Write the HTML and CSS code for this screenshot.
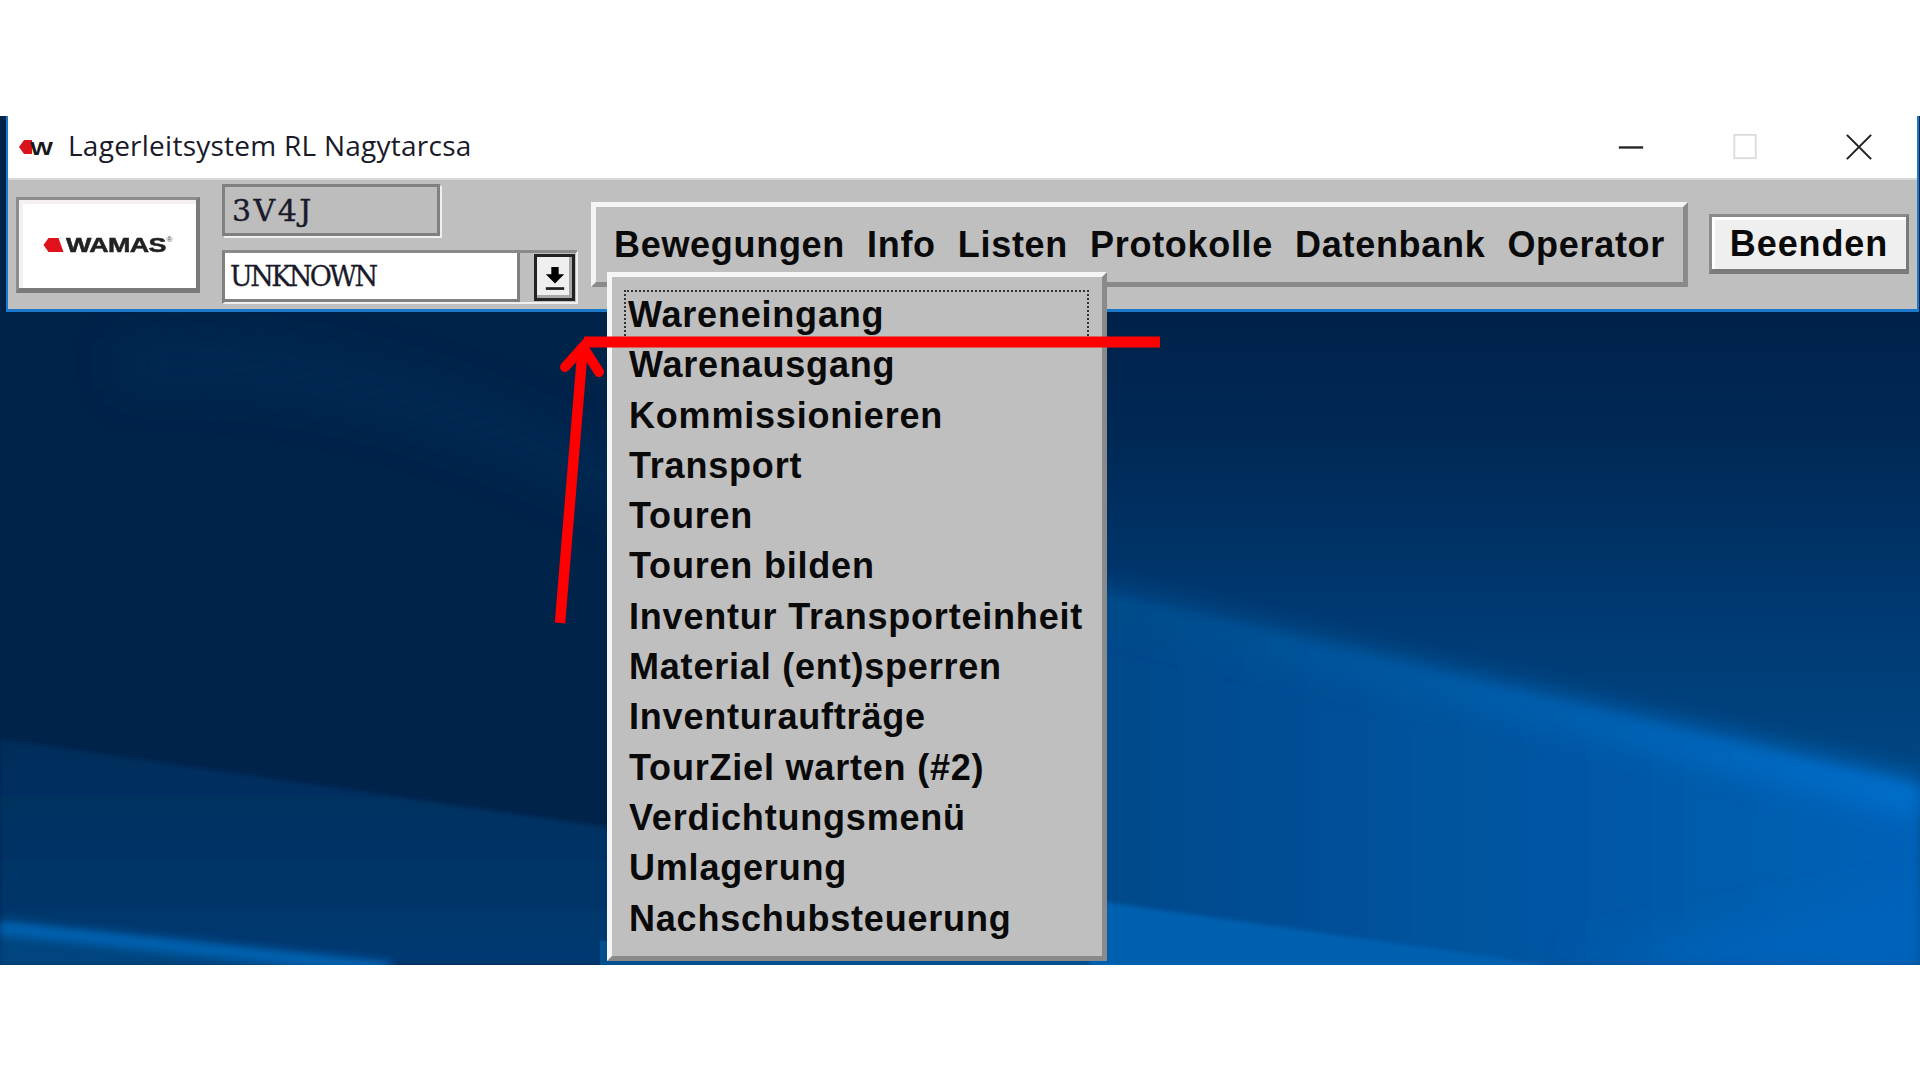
FILE: index.html
```html
<!DOCTYPE html>
<html lang="en">
<head>
    <meta charset="UTF-8">
    <title>Lagerleitsystem RL Nagytarcsa</title>
    <link rel="stylesheet" href="styles.css">
</head>
<body>

<div class="desktop">

    <svg class="wallpaper" viewBox="0 0 1920 849" preserveAspectRatio="none">
        <defs>
            <linearGradient id="rightSky" x1="0" y1="0" x2="0" y2="700" gradientUnits="userSpaceOnUse">
                <stop offset="0.290" stop-color="#00224a"/>
                <stop offset="0.490" stop-color="#002a58"/>
                <stop offset="0.690" stop-color="#003870"/>
                <stop offset="1" stop-color="#004a88"/>
            </linearGradient>
            <linearGradient id="rightLow" x1="1100" y1="0" x2="1920" y2="0" gradientUnits="userSpaceOnUse">
                <stop offset="0" stop-color="#00488a"/>
                <stop offset="1" stop-color="#0062b8"/>
            </linearGradient>
            <linearGradient id="ridge" x1="1100" y1="0" x2="1920" y2="0" gradientUnits="userSpaceOnUse">
                <stop offset="0" stop-color="#004a88"/>
                <stop offset="1" stop-color="#006fcc"/>
            </linearGradient>
            <linearGradient id="leftBand" x1="0" y1="620" x2="0" y2="849" gradientUnits="userSpaceOnUse">
                <stop offset="0" stop-color="#002c5a"/>
                <stop offset="1" stop-color="#003a72"/>
            </linearGradient>
            <filter id="blur2" filterUnits="userSpaceOnUse" x="0" y="0" width="1920" height="849"><feGaussianBlur stdDeviation="2"/></filter>
            <filter id="blur5" filterUnits="userSpaceOnUse" x="0" y="0" width="1920" height="849"><feGaussianBlur stdDeviation="5"/></filter>
            <filter id="blur12" filterUnits="userSpaceOnUse" x="0" y="0" width="1920" height="849"><feGaussianBlur stdDeviation="12"/></filter>
            <filter id="blur20" filterUnits="userSpaceOnUse" x="0" y="0" width="1920" height="849"><feGaussianBlur stdDeviation="20"/></filter>
        </defs>
        <rect width="1920" height="849" fill="#00234a"/>

        <!-- left of the menu -->
        <path d="M120 250 Q350 230 640 380" fill="none" stroke="#002d58" stroke-width="50" opacity="0.5" filter="url(#blur20)"/>
        <path d="M0 623 L640 716 V849 H0 Z" fill="url(#leftBand)" filter="url(#blur2)"/>
        <path d="M0 806 L400 849 H0 Z" fill="#00457f" filter="url(#blur2)"/>
        <path d="M0 812 L390 853" fill="none" stroke="#0062b0" stroke-width="14" filter="url(#blur5)"/>
        <rect x="600" y="825" width="500" height="24" fill="#00508f"/>

        <!-- right of the menu -->
        <rect x="1090" width="830" height="849" fill="url(#rightSky)"/>
        <path d="M1090 476 L1920 672 V849 H1090 Z" fill="url(#rightLow)" filter="url(#blur5)"/>
        <path d="M1090 486 L1920 684" fill="none" stroke="url(#ridge)" stroke-width="36" filter="url(#blur12)"/>
        <path d="M1090 784 L1570 852 H1090 Z" fill="#0060b0" filter="url(#blur2)"/>
        <path d="M1560 849 L1920 780 V849 Z" fill="#0064bc" filter="url(#blur20)"/>
    </svg>

    <div class="window">
        <div class="titlebar">
            <svg class="app-icon" viewBox="0 0 34 20">
                <path d="M0 10 L5 3 H13 V17 H5 Z" fill="#d8141c"/>
                <text class="app-icon-w" x="11" y="17.500" textLength="23" lengthAdjust="spacingAndGlyphs">W</text>
            </svg>
            <span class="title">Lagerleitsystem RL Nagytarcsa</span>
            <div class="win-buttons">
                <div class="win-btn"><svg viewBox="0 0 30 30"><path d="M2 15.500 H28" stroke="#222" stroke-width="2.500"/></svg></div>
                <div class="win-btn"><svg viewBox="0 0 30 30"><rect x="3.500" y="2" width="23" height="25" fill="none" stroke="#dcdcdc" stroke-width="2"/></svg></div>
                <div class="win-btn"><svg viewBox="0 0 30 30"><path d="M2 2 L28 28 M28 2 L2 28" stroke="#222" stroke-width="2.200"/></svg></div>
            </div>
        </div>

        <div class="toolbar">
            <div class="logo-btn">
                <svg class="logo-mark" viewBox="0 0 20 16">
                    <path d="M0 8 L5 1 H15 L20 15 H5 Z" fill="#e0101c"/>
                </svg>
                <span class="logo-text">WAMAS</span><span class="logo-reg">®</span>
            </div>

            <div class="fields">
                <div class="field field-ro">3V4J</div>
                <div class="combo">
                    <div class="field field-edit">UNKNOWN</div>
                    <div class="combo-btn">
                        <svg viewBox="0 0 24 28">
                            <path d="M8 2 H16 V10 H22 L12 20 L2 10 H8 Z" fill="#000"/>
                            <rect x="2" y="24" width="20" height="3" fill="#222"/>
                        </svg>
                    </div>
                </div>
            </div>

            <ul class="menubar">
                <li>Bewegungen</li>
                <li>Info</li>
                <li>Listen</li>
                <li>Protokolle</li>
                <li>Datenbank</li>
                <li>Operator</li>
            </ul>

            <button class="quit-btn">Beenden</button>
        </div>
    </div>

    <ul class="dropdown">
        <li class="focused">Wareneingang</li>
        <li>Warenausgang</li>
        <li>Kommissionieren</li>
        <li>Transport</li>
        <li>Touren</li>
        <li>Touren bilden</li>
        <li>Inventur Transporteinheit</li>
        <li>Material (ent)sperren</li>
        <li>Inventuraufträge</li>
        <li>TourZiel warten (#2)</li>
        <li>Verdichtungsmenü</li>
        <li>Umlagerung</li>
        <li>Nachschubsteuerung</li>
    </ul>

    <!-- red annotation drawn over the screenshot -->
    <svg class="marker" viewBox="0 0 1920 849">
        <path d="M584 226 H1160" stroke="#ff0000" stroke-width="11"/>
        <path d="M560 507 L583 229" stroke="#ff0000" stroke-width="10.500"/>
        <path d="M565 251 L583 231 L599 256" fill="none" stroke="#ff0000" stroke-width="10" stroke-linecap="round"/>
    </svg>
</div>

</body>
</html>
```

FILE: styles.css
```css
* {
    margin: 0;
    padding: 0;
    box-sizing: border-box;
}

html, body {
    height: 1080px;
    overflow: hidden;
    background-color: #fff;
}

body {
    padding-top: 116px;
    font-family: "Liberation Sans", Arial, sans-serif;
}

ul {
    list-style: none;
}

.desktop {
    position: relative;
    height: 849px;
    padding-left: 6px;
    padding-right: 1px;
    overflow: hidden;
}

.wallpaper {
    position: absolute;
    left: 0;
    top: 0;
    width: 100%;
    height: 100%;
}

.window {
    position: relative;
    display: flex;
    flex-direction: column;
    border-left: 2px solid #1c78c8;
    border-right: 2px solid #1c78c8;
    border-bottom: 3px solid #1c78c8;
}

.titlebar {
    display: flex;
    align-items: center;
    height: 62px;
    background-color: #fff;
    padding-left: 11px;
}

.app-icon {
    width: 34px;
    height: 20px;
}

.app-icon-w {
    font-family: "Liberation Sans", sans-serif;
    font-size: 19px;
    font-weight: bold;
    fill: #1a1a1a;
}

.title {
    margin-left: 15px;
    margin-bottom: 5px;
    font-family: "Open Sans", sans-serif;
    font-size: 28px;
    letter-spacing: 0.25px;
    color: #1a1a2a;
}

.win-buttons {
    display: flex;
    margin-left: auto;
    margin-right: 1px;
}

.win-btn {
    width: 114px;
    display: flex;
    justify-content: center;
    align-items: center;
}

.win-btn svg {
    width: 28px;
    height: 28px;
}

.toolbar {
    position: relative;
    display: flex;
    height: 131px;
    background-color: #bfbfbf;
    border-top: 2px solid #d8d8d8;
    padding-left: 8px;
}

.logo-btn {
    display: flex;
    align-items: center;
    justify-content: center;
    width: 184px;
    height: 96px;
    margin-top: 17px;
    background-color: #fff;
    border: 3px solid;
    border-color: #8c8c8c #7a7a7a #7a7a7a #8c8c8c;
    border-bottom-width: 5px;
    border-right-width: 4px;
    box-shadow: inset 4px 4px 0 #f4f0f0;
}

.logo-mark {
    width: 21px;
    height: 16px;
    margin-right: 2px;
    margin-top: 1px;
}

.logo-text {
    font-family: "Liberation Sans", sans-serif;
    font-weight: bold;
    font-size: 21px;
    -webkit-text-stroke: 0.5px #222;
    transform: scaleX(1.28);
    transform-origin: left center;
    margin-right: 23px;
    margin-top: 2px;
    color: #222;
    letter-spacing: -0.5px;
}

.logo-reg {
    font-size: 8px;
    margin-bottom: 10px;
    color: #444;
}

.fields {
    display: flex;
    flex-direction: column;
    gap: 14px;
    width: 356px;
    margin-left: 22px;
    margin-top: 4px;
}

.field {
    font-family: "DejaVu Serif", "Liberation Serif", serif;
    color: #1a1a2a;
    display: flex;
    align-items: center;
    padding-left: 5px;
    border: 3px solid #808080;
}

.field-ro {
    width: 218px;
    height: 52px;
    padding-left: 7px;
    font-size: 30px;
    letter-spacing: 2.500px;
    -webkit-text-stroke: 0.4px #1a1a2a;
    background-color: #bdbdbd;
    box-shadow: 2px 2px 0 #f0f0f0;
}

.field-edit {
    width: 295px;
    height: 100%;
    font-size: 27px;
    letter-spacing: -2.600px;
    -webkit-text-stroke: 0.3px #1a1a2a;
    background-color: #fff;
    border-top: 0;
    border-left: 0;
}

.combo {
    display: flex;
    align-items: center;
    height: 54px;
    border: 3px solid;
    border-color: #8a8a8a #f0f0f0 #f0f0f0 #808080;
    border-right-width: 2px;
    border-bottom-width: 2px;
}

.combo-btn {
    display: flex;
    align-items: center;
    justify-content: center;
    width: 41px;
    height: 47px;
    margin-left: 14px;
    background-color: #efefef;
    border: 3px solid #222;
    box-shadow: inset -3px -3px 0 #a8a8a8;
}

.combo-btn svg {
    width: 22px;
    height: 26px;
}

.menubar {
    display: flex;
    align-items: center;
    gap: 22px;
    width: 1097px;
    height: 85px;
    margin-left: 13px;
    margin-top: 22px;
    padding-left: 18px;
    background-color: #bfbfbf;
    border: 5px solid;
    border-color: #f4f4f4 #8a8a8a #8a8a8a #f4f4f4;
    font-size: 36px;
    font-weight: bold;
    letter-spacing: 0.7px;
    color: #0a0a0a;
}

.quit-btn {
    width: 200px;
    height: 60px;
    margin-left: 21px;
    margin-top: 34px;
    padding-top: 2px;
    font-family: inherit;
    font-size: 36px;
    font-weight: bold;
    letter-spacing: 0.9px;
    color: #0a0a0a;
    background-color: #efefef;
    border: 3px solid;
    border-color: #8a8a8a #7a7a7a #7a7a7a #8a8a8a;
    border-bottom-width: 5px;
    box-shadow: inset 3px 3px 0 #fff;
}

.dropdown {
    position: absolute;
    left: 607px;
    top: 156px;
    width: 500px;
    height: 689px;
    padding: 13px 13px 0 12px;
    background-color: #bfbfbf;
    border: 5px solid;
    border-color: #f6f6f6 #8a8a8a #8a8a8a #f6f6f6;
    font-size: 36px;
    font-weight: bold;
    letter-spacing: 0.8px;
    color: #0a0a0a;
}

.dropdown li {
    height: 50.300px;
    line-height: 50px;
    padding-left: 5px;
    white-space: nowrap;
}

.dropdown li.focused {
    outline: 2px dotted #333;
    outline-offset: -2px;
    padding-left: 4px;
}

.marker {
    position: absolute;
    left: 0;
    top: 0;
    width: 1920px;
    height: 849px;
}
```
